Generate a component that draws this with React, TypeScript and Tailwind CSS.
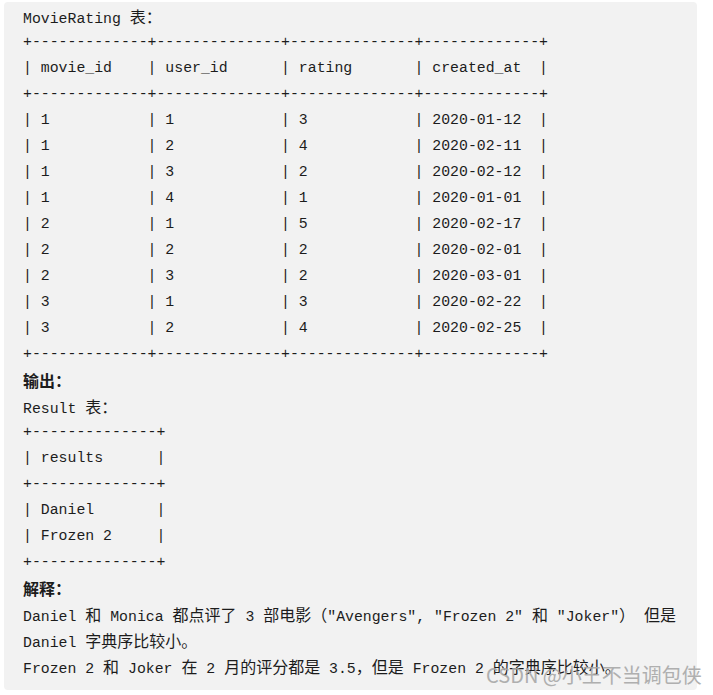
import React from "react";

const lines: { text: string; bold?: boolean }[] = [
  { text: "MovieRating 表：" },
  { text: "+-------------+--------------+--------------+-------------+" },
  { text: "| movie_id    | user_id      | rating       | created_at  |" },
  { text: "+-------------+--------------+--------------+-------------+" },
  { text: "| 1           | 1            | 3            | 2020-01-12  |" },
  { text: "| 1           | 2            | 4            | 2020-02-11  |" },
  { text: "| 1           | 3            | 2            | 2020-02-12  |" },
  { text: "| 1           | 4            | 1            | 2020-01-01  |" },
  { text: "| 2           | 1            | 5            | 2020-02-17  |" },
  { text: "| 2           | 2            | 2            | 2020-02-01  |" },
  { text: "| 2           | 3            | 2            | 2020-03-01  |" },
  { text: "| 3           | 1            | 3            | 2020-02-22  |" },
  { text: "| 3           | 2            | 4            | 2020-02-25  |" },
  { text: "+-------------+--------------+--------------+-------------+" },
  { text: "输出：", bold: true },
  { text: "Result 表：" },
  { text: "+--------------+" },
  { text: "| results      |" },
  { text: "+--------------+" },
  { text: "| Daniel       |" },
  { text: "| Frozen 2     |" },
  { text: "+--------------+" },
  { text: "解释：", bold: true },
  { text: "Daniel 和 Monica 都点评了 3 部电影（\"Avengers\", \"Frozen 2\" 和 \"Joker\"） 但是" },
  { text: "Daniel 字典序比较小。" },
  { text: "Frozen 2 和 Joker 在 2 月的评分都是 3.5，但是 Frozen 2 的字典序比较小。" },
];

function Line({ text, bold }: { text: string; bold?: boolean }) {
  const parts = text.split(/([\u3000-\u303f\u4e00-\u9fff\uff00-\uffef]+)/);
  return (
    <div className={"h-[26px] leading-[26px] whitespace-pre " + (bold ? "font-bold" : "")}>
      {parts.map((p, i) =>
        i % 2 === 1 ? (
          <span key={i} className="text-[16px] font-['Noto_Sans_CJK_SC',sans-serif]">
            {p}
          </span>
        ) : (
          <span key={i}>{p}</span>
        )
      )}
    </div>
  );
}

export default function App() {
  return (
    <div className="relative w-[713px] h-[695px] bg-white overflow-hidden pt-[2px] pl-[4px]">
      <div className="w-[693px] rounded-[4px] bg-[#f2f2f2] pl-[19px] pt-[1px] pb-[11px] text-[#1c1c1c] text-[14.83px] font-['Liberation_Mono','Noto_Sans_CJK_SC',monospace]">
        {lines.map((l, i) => (
          <Line key={i} text={l.text} bold={l.bold} />
        ))}
      </div>
      <div className="absolute left-[486px] top-[662px] text-[20px] leading-[26px] whitespace-nowrap text-[#a8a8a8] opacity-90 font-['Noto_Sans_CJK_SC',sans-serif]">
        CSDN @小王不当调包侠
      </div>
    </div>
  );
}
